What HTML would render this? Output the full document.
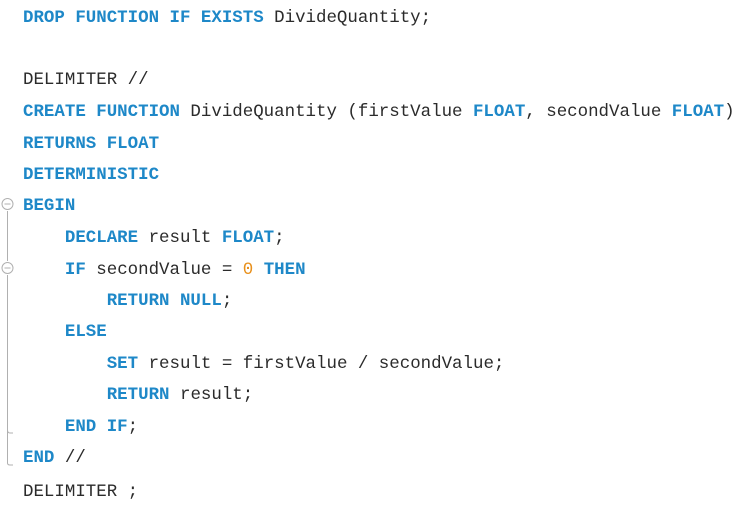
<!DOCTYPE html>
<html><head><meta charset="utf-8"><style>
body{margin:0;width:748px;height:505px;background:#fff;overflow:hidden;position:relative}
.l{position:absolute;left:23px;white-space:pre;font-family:"Liberation Mono",monospace;font-size:17.45px;line-height:20px;color:#2b2b2b}
.k{color:#1e88c8;font-weight:bold}
.n{color:#e8901c}
</style></head><body>
<svg width="20" height="505" style="position:absolute;left:0;top:0" fill="none" stroke="#b0b0b0" stroke-width="1">
<line x1="7.5" y1="211" x2="7.5" y2="261"/>
<line x1="7.5" y1="275" x2="7.5" y2="462"/>
<path d="M7.5 462 L7.5 463 Q7.5 465 10 465 L13 465"/>
<path d="M7.5 430 Q7.5 433 10 433 L13 433"/>
<circle cx="7.5" cy="204" r="5.5" fill="#fff"/><line x1="4.5" y1="204" x2="10.5" y2="204"/>
<circle cx="7.5" cy="268" r="5.5" fill="#fff"/><line x1="4.5" y1="268" x2="10.5" y2="268"/>
</svg>
<div class="l" style="top:8px"><span class="k">DROP FUNCTION IF EXISTS</span> DivideQuantity;</div>
<div class="l" style="top:70px">DELIMITER //</div>
<div class="l" style="top:102px"><span class="k">CREATE FUNCTION</span> DivideQuantity (firstValue <span class="k">FLOAT</span>, secondValue <span class="k">FLOAT</span>)</div>
<div class="l" style="top:134px"><span class="k">RETURNS FLOAT</span></div>
<div class="l" style="top:165px"><span class="k">DETERMINISTIC</span></div>
<div class="l" style="top:196px"><span class="k">BEGIN</span></div>
<div class="l" style="top:228px">    <span class="k">DECLARE</span> result <span class="k">FLOAT</span>;</div>
<div class="l" style="top:260px">    <span class="k">IF</span> secondValue = <span class="n">0</span> <span class="k">THEN</span></div>
<div class="l" style="top:291px">        <span class="k">RETURN NULL</span>;</div>
<div class="l" style="top:322px">    <span class="k">ELSE</span></div>
<div class="l" style="top:354px">        <span class="k">SET</span> result = firstValue / secondValue;</div>
<div class="l" style="top:385px">        <span class="k">RETURN</span> result;</div>
<div class="l" style="top:417px">    <span class="k">END IF</span>;</div>
<div class="l" style="top:448px"><span class="k">END</span> //</div>
<div class="l" style="top:482px">DELIMITER ;</div>
</body></html>
